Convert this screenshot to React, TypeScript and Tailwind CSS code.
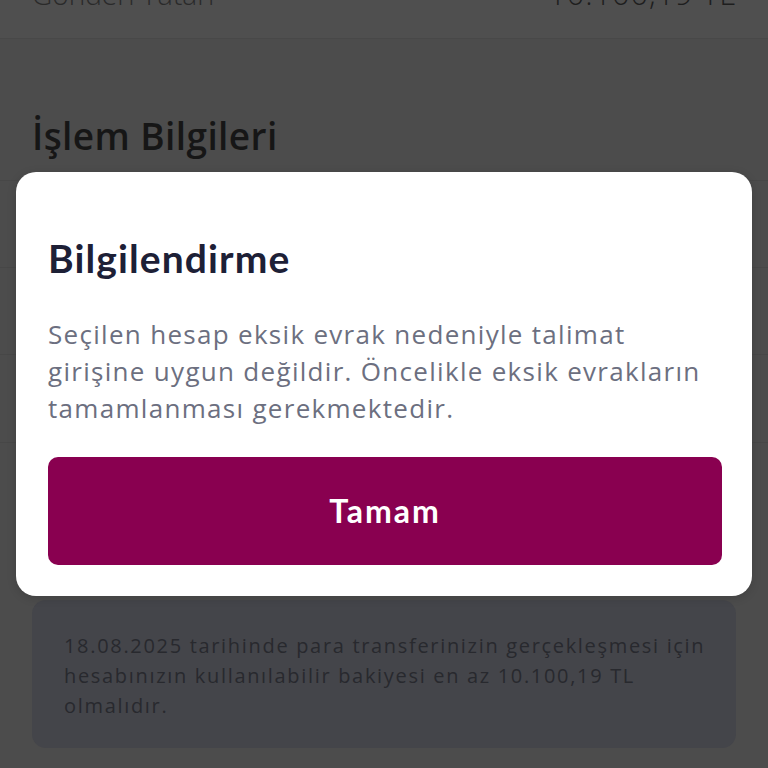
export default function App() {
  return (
    <div className="relative w-[768px] h-[768px] overflow-hidden bg-[#4c4c4c] font-['Open_Sans',sans-serif]">
      {/* background page (dimmed) */}
      <div className="flex flex-col">
        <div className="h-[39px] bg-[#4f4f4f] border-b border-[#484848] flex justify-between items-start px-8 overflow-hidden">
          <span className="-mt-[24px] text-[28px] leading-[36px] text-[#2a2a2a] font-light">Gönderi Tutarı</span>
          <span className="-mt-[25px] text-[31px] leading-[36px] text-[#1e1e1e] font-light tracking-[0.8px]">10.100,19 TL</span>
        </div>
        <div className="h-[52px]" />
        <div className="h-[90px] px-8 flex items-center border-b border-[#474747]">
          <span className="text-[37px] leading-[44px] font-semibold text-[#161616] tracking-[0.4px]">İşlem Bilgileri</span>
        </div>
        <div className="h-[87px] border-b border-[#474747]" />
        <div className="h-[87px] border-b border-[#474747]" />
        <div className="h-[88px] border-b border-[#474747]" />
        <div className="h-[157px]" />
        <div className="mx-8 rounded-[14px] bg-[#44454a] px-8 pt-[31px] pb-[27px] text-[20px] leading-[30px] text-[#28292e] tracking-[1.68px] whitespace-nowrap">
          18.08.2025 tarihinde para transferinizin gerçekleşmesi için<br />
          hesabınızın kullanılabilir bakiyesi en az 10.100,19 TL<br />
          olmalıdır.
        </div>
      </div>

      {/* modal */}
      <div className="absolute left-4 top-[172px] w-[736px] h-[424px] bg-white rounded-[20px] px-8 pt-[62px] shadow-[0_2px_10px_rgba(0,0,0,0.15)]">
        <h2 className="font-['Lato',sans-serif] text-[39px] leading-[48px] font-bold text-[#1d2036] tracking-[1.1px]">Bilgilendirme</h2>
        <p className="mt-[34px] text-[26px] leading-[37px] text-[#6c6f80] tracking-[1.3px] whitespace-nowrap">
          Seçilen hesap eksik evrak nedeniyle talimat<br />
          girişine uygun değildir. Öncelikle eksik evrakların<br />
          tamamlanması gerekmektedir.
        </p>
        <button className="mt-[30px] w-[674px] h-[108px] rounded-[10px] bg-[#890050] text-white font-['Lato',sans-serif] text-[32px] font-bold tracking-[2px]">
          Tamam
        </button>
      </div>
    </div>
  );
}
